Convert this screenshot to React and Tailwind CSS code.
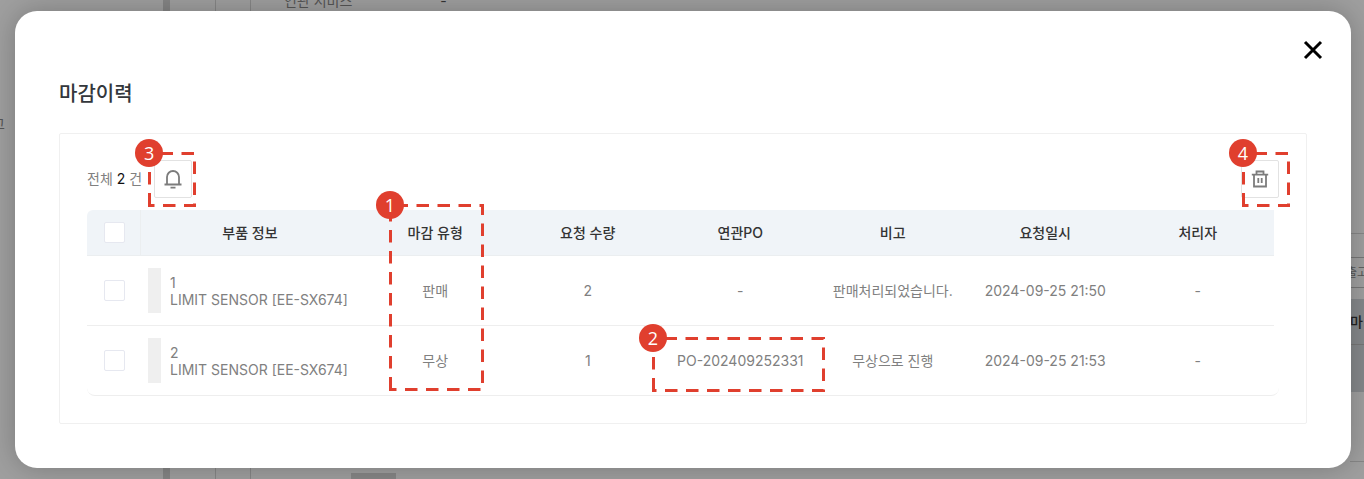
const rows = [
  { no: 1, part: "LIMIT SENSOR [EE-SX674]", type: "판매", qty: 2, po: "-", note: "판매처리되었습니다.", at: "2024-09-25 21:50", by: "-" },
  { no: 2, part: "LIMIT SENSOR [EE-SX674]", type: "무상", qty: 1, po: "PO-202409252331", note: "무상으로 진행", at: "2024-09-25 21:53", by: "-" },
];

function Callout({ number, width, height, className }) {
  return (
    <div className={`pointer-events-none absolute z-10 ${className}`}>
      <svg width={width + 3} height={height + 3} className="block" fill="none" aria-hidden="true">
        <path
          d={`M1.5 ${height + 1.5}V1.5H${width + 1.5}V${height + 1.5}Z`}
          stroke="#e03f2e"
          strokeWidth="3"
          strokeDasharray="12.5 8.5"
        />
      </svg>
      <span className="absolute -top-[13px] -left-[13px] flex size-7 items-center justify-center rounded-full bg-[#e03f2e] font-['Open_Sans',sans-serif] text-lg leading-none font-normal text-white">
        {number}
      </span>
    </div>
  );
}

function Tick({ label }) {
  return (
    <input
      type="checkbox"
      aria-label={label}
      className="block size-[21px] appearance-none rounded-xs border border-[#e6e8f0] bg-white checked:bg-sky-500"
    />
  );
}

function Backdrop() {
  return (
    <div aria-hidden="true" className="absolute inset-0 flex overflow-hidden text-sm text-[#555]">
      <div className="w-[163px] pt-[114px]">
        <span className="-ml-2 block">고</span>
      </div>
      <div className="w-[7px] bg-[#858585]" />
      <div className="w-[46px] border-r border-[#868686]" />
      <div className="w-[35px] border-r border-[#868686]" />
      <div className="flex flex-1 flex-col justify-between pl-[33px]">
        <div className="-mt-[9px] flex gap-[88px]">
          <span>연관 서비스</span>
          <span className="text-[#333]">-</span>
        </div>
        <div className="ml-[67px] h-[6px] w-[45px] bg-[#868686]" />
      </div>
      <div className="flex w-[14px] flex-col">
        <div className="h-[234px] border-b border-[#868686]" />
        <div className="h-6 border-b border-[#777]" />
        <div className="flex h-[30px] items-center border-b border-[#777] text-xs whitespace-nowrap">
          <span className="-ml-1">출고</span>
        </div>
        <div className="mt-[11px] flex h-[46px] items-center border-b border-[#777] bg-[#85888b] font-medium text-[#222]">마</div>
        <div className="h-[47px] bg-[#85888b]" />
        <div className="h-[70px] border-b border-[#868686]" />
      </div>
    </div>
  );
}

const headings = ["부품 정보", "마감 유형", "요청 수량", "연관PO", "비고", "요청일시", "처리자"];

export default function App() {
  return (
    <div className="relative flex min-h-screen bg-[#9f9f9f] pt-[11px] pr-[13px] pb-[11px] pl-[15px] font-[Inter,'Noto_Sans_CJK_KR',sans-serif]">
      <Backdrop />
      <section
        role="dialog"
        aria-labelledby="dialog-title"
        className="relative flex-1 rounded-[22px] bg-white px-11 pt-6 pb-11 shadow-[0_0_28px_rgba(0,0,0,0.24)]"
      >
        <div className="-mr-[21px] flex justify-end">
          <button type="button" aria-label="닫기" className="flex size-[30px] items-center justify-center">
            <svg width="20" height="20" viewBox="0 0 20 20" stroke="#000" strokeWidth="3" aria-hidden="true">
              <path d="M2 2L18 18M18 2L2 18" />
            </svg>
          </button>
        </div>
        <h1 id="dialog-title" className="mt-[13px] text-xl leading-8 font-medium text-[#33373c]">마감이력</h1>

        <div className="mt-[23px] rounded-xs border border-[#f0f0f0] px-[27px] pt-[26px] pb-[27px]">
          <div className="flex items-center">
            <p className="text-sm whitespace-nowrap text-[#808080]">
              전체 <span className="text-[#111]">2</span> 건
            </p>
            <div className="relative ml-3">
              <button type="button" aria-label="알림" className="flex size-[38px] items-center justify-center rounded-xs border border-[#e2e2e2]">
                <svg width="18" height="20" viewBox="0 0 18 20" fill="none" stroke="#7c7c7c" strokeWidth="1.8" aria-hidden="true">
                  <path d="M0.5 15.5H17.5M3 15.5V8A6 6 0 0 1 15 8V15.5M6.500 18.600H11.500" />
                </svg>
              </button>
              <Callout number={3} width={45} height={52} className="top-[-8px] left-[-6px]" />
            </div>
            <div className="relative ml-auto">
              <button type="button" aria-label="삭제" className="flex size-[38px] items-center justify-center rounded-xs border border-[#e2e2e2]">
                <svg width="18" height="18" viewBox="0 0 18 18" fill="none" stroke="#7c7c7c" strokeWidth="1.8" aria-hidden="true">
                  <path d="M0.8 4.700H17.200M5.500 4.500V1.500H12.500V4.500M3 4.500V16.500H15V4.500M7.300 8V13M10.700 8V13" />
                </svg>
              </button>
              <Callout number={4} width={45} height={52} className="top-[-8px] left-px" />
            </div>
          </div>

          <div className="mt-3 rounded-lg border-b border-[#eee] pr-[5px]">
            <table className="w-full table-fixed border-separate border-spacing-0 text-center text-sm text-[#808080]">
              <colgroup>
                <col className="w-[54px]" />
                <col className="w-[218px]" />
                <col span={6} />
              </colgroup>
              <thead>
                <tr className="h-[46px] text-[#333]">
                  <th className="rounded-tl-md border-r border-b border-[#ebeef0] bg-[#f0f4f8] pr-0 pl-[17px] font-medium">
                    <Tick label="전체 선택" />
                  </th>
                  {headings.map((h) => (
                    <th key={h} className="relative border-b border-[#ebeef0] bg-[#f0f4f8] p-0 font-medium">
                      {h}
                      {h === "마감 유형" && <Callout number={1} width={92} height={184} className="top-[-6px] left-[30px]" />}
                    </th>
                  ))}
                </tr>
              </thead>
              <tbody className="[&>tr:first-child>td]:border-b [&>tr:first-child>td]:border-[#eee]">
                {rows.map((r) => (
                  <tr key={r.no} className="h-[70px] last:h-[69px]">
                    <td className="pr-0 pl-[17px]">
                      <Tick label={`${r.no}번 선택`} />
                    </td>
                    <td className="pl-[7px] text-left">
                      <div className="flex items-center gap-[9px]">
                        <div className="h-[45px] w-[13px] bg-[#efefef]" />
                        <div className="leading-[17px] whitespace-nowrap">
                          {r.no}
                          <br />
                          {r.part}
                        </div>
                      </div>
                    </td>
                    <td>{r.type}</td>
                    <td>{r.qty}</td>
                    <td className="relative">
                      {r.po}
                      {r.no === 2 && <Callout number={2} width={170} height={52} className="top-[11px] left-[-12px]" />}
                    </td>
                    <td className="whitespace-nowrap">{r.note}</td>
                    <td className="whitespace-nowrap">{r.at}</td>
                    <td>{r.by}</td>
                  </tr>
                ))}
              </tbody>
            </table>
          </div>
        </div>
      </section>
    </div>
  );
}
